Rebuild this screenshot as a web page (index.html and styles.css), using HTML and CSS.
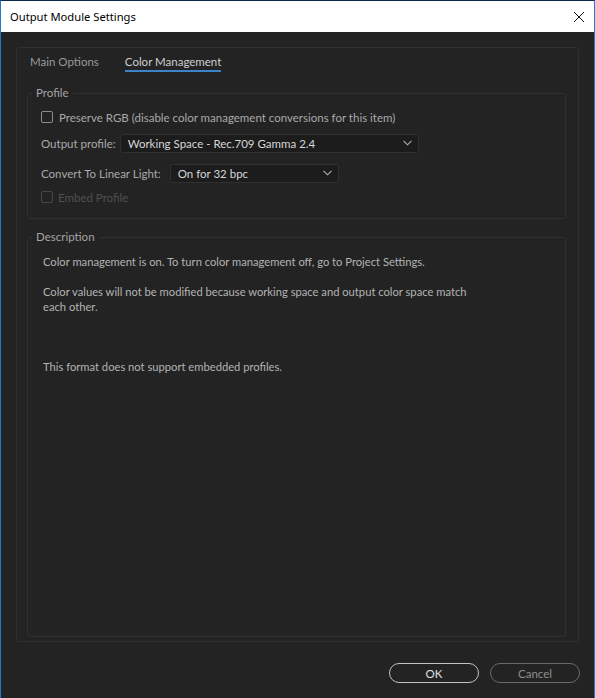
FILE: index.html
```html
<!DOCTYPE html>
<html>
<head>
<meta charset="utf-8">
<title>Output Module Settings</title>
<link rel="stylesheet" href="styles.css">
</head>
<body>
<div class="window">
  <div class="titlebar">
    <span class="title">Output Module Settings</span>
    <svg class="close" width="12" height="12" viewBox="0 0 12 12"><path d="M1 1 L11 11 M11 1 L1 11" stroke="#111" stroke-width="1" fill="none"/></svg>
  </div>
  <div class="content">
    <div class="panel">
      <div class="tabs">
        <span class="tab">Main Options</span>
        <span class="tab active">Color Management</span>
      </div>
      <fieldset class="group profile">
        <legend>Profile</legend>
        <div class="row r1">
          <span class="check"></span>
          <span class="label">Preserve RGB (disable color management conversions for this item)</span>
        </div>
        <div class="row r2">
          <span class="label">Output profile:</span>
          <div class="select sel-profile"><span>Working Space - Rec.709 Gamma 2.4</span><svg class="chev" width="9" height="6" viewBox="0 0 9 6"><path d="M0.5 0.8 L4.5 4.8 L8.5 0.8" stroke="#b0b0b0" stroke-width="1.1" fill="none"/></svg></div>
        </div>
        <div class="row r3">
          <span class="label">Convert To Linear Light:</span>
          <div class="select sel-linear"><span>On for 32 bpc</span><svg class="chev" width="9" height="6" viewBox="0 0 9 6"><path d="M0.5 0.8 L4.5 4.8 L8.5 0.8" stroke="#b0b0b0" stroke-width="1.1" fill="none"/></svg></div>
        </div>
        <div class="row r4 disabled">
          <span class="check"></span>
          <span class="label">Embed Profile</span>
        </div>
      </fieldset>
      <fieldset class="group description">
        <legend>Description</legend>
        <p class="p1">Color management is on. To turn color management off, go to Project Settings.</p>
        <p class="p2">Color values will not be modified because working space and output color space match<br>each other.</p>
        <p class="p3">This format does not support embedded profiles.</p>
      </fieldset>
    </div>
    <div class="buttons">
      <button class="btn ok">OK</button>
      <button class="btn cancel">Cancel</button>
    </div>
  </div>
</div>
</body>
</html>
```
FILE: styles.css
```css
html, body {
  margin: 0;
  padding: 0;
  background: #232323;
}
.window {
  width: 595px;
  height: 698px;
  box-sizing: border-box;
  border-left: 1px solid #2477cf;
  border-right: 1px solid #2477cf;
  border-top: 1px solid #0d2a4c;
  background: #232323;
  display: flex;
  flex-direction: column;
  font-family: Lato, "Liberation Sans", sans-serif;
  font-size: 11.5px;
  color: #a9a9a9;
}
.titlebar {
  height: 31px;
  background: #ffffff;
  display: flex;
  align-items: center;
  justify-content: space-between;
  padding: 0 9px 0 9px;
}
.title {
  font-family: "Noto Sans", "Liberation Sans", sans-serif;
  font-size: 11.2px;
  color: #000;
}
.close {
  display: block;
}
.content {
  flex: 1;
  display: flex;
  flex-direction: column;
  padding: 15px 14px 15px 15px;
}
.panel {
  height: 595px;
  box-sizing: border-box;
  border: 1px solid #303030;
  border-radius: 3px;
  margin-right: 1px;
  display: flex;
  flex-direction: column;
  padding: 0 12px 4px 10px;
}
.tabs {
  display: flex;
  gap: 26px;
  padding-left: 3px;
  height: 24px;
}
.tab {
  padding-top: 6px;
  line-height: 16px;
  height: 16px;
  color: #9a9a9a;
  border-bottom: 2px solid transparent;
}
.tab.active {
  color: #cfcfcf;
  border-bottom-color: #3b84c8;
}
.group {
  margin: 0;
  border: 1px solid #303030;
  border-radius: 3px;
  min-width: 0;
}
.group legend {
  padding: 0 4px;
  line-height: 16px;
  color: #a3a3a3;
  font-size: 11.5px;
}
.profile {
  margin-top: 13px;
  padding: 6px 10px 11px 13px;
  display: flex;
  flex-direction: column;
}
.profile legend { margin-left: -9px; }
.row {
  display: flex;
  align-items: center;
  height: 20px;
}
.r1 .label { margin-left: 1px; }
.r2 { margin-top: 6px; }
.r3 { margin-top: 10px; }
.r4 { margin-top: 4px; }
.check {
  width: 10px;
  height: 10px;
  border: 1.5px solid #8c8c8c;
  border-radius: 2px;
  margin-right: 5px;
  flex: none;
}
.disabled .check { border-color: #474747; }
.disabled .label { color: #505050; }
.select {
  height: 19px;
  box-sizing: border-box;
  background: #1c1c1c;
  border: 1px solid #303030;
  border-radius: 3px;
  display: flex;
  align-items: center;
  justify-content: space-between;
  padding: 0 6px 0 7px;
  color: #d6d6d6;
}
.sel-profile { width: 299px; margin-left: 4px; }
.sel-linear { width: 169px; margin-left: 9px; }
.chev { display: block; }
.description {
  flex: 1;
  margin-top: 10px;
  padding: 9px 15px 0 15px;
}
.description legend { margin-left: -11px; }
.description p {
  margin: 0;
  line-height: 15px;
  font-size: 11.2px;
  color: #b3b3b3;
}
.description .p2 { margin-top: 15px; }
.description .p3 { margin-top: 45px; }
.buttons {
  display: flex;
  justify-content: flex-end;
  gap: 11px;
  margin-top: 21px;
}
.btn {
  width: 90px;
  height: 20px;
  box-sizing: border-box;
  border-radius: 10px;
  background: transparent;
  font-family: Lato, "Liberation Sans", sans-serif;
  font-size: 11.5px;
  padding: 0;
}
.ok {
  border: 1.5px solid #c4c4c4;
  color: #e0e0e0;
}
.cancel {
  border: 1.5px solid #6a6a6a;
  color: #8f8f8f;
}
```
